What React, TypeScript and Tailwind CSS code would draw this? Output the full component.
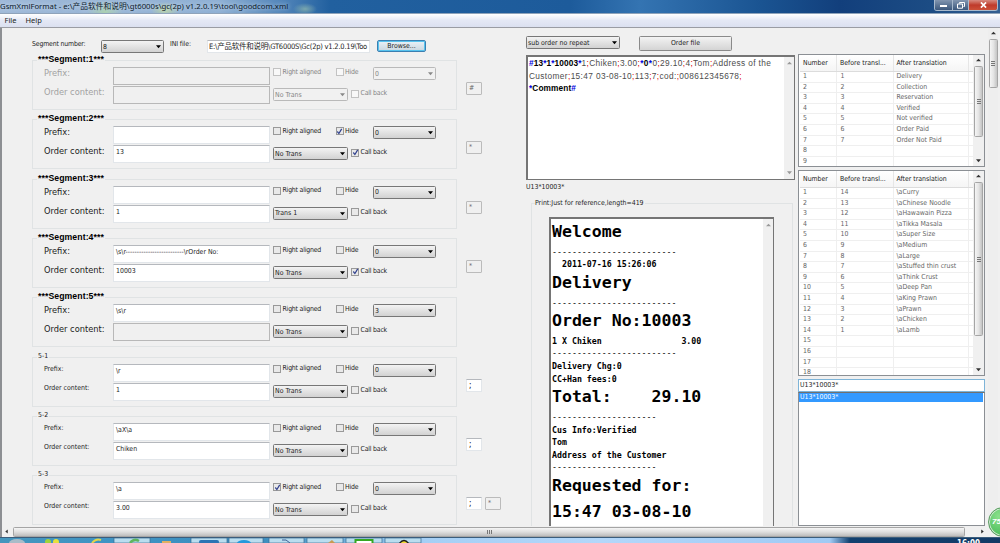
import type { ReactNode } from "react"
import clsx from "clsx"

type Segment = {
  title: string
  small?: boolean
  disabled?: boolean
  prefix: string
  content: string
  contentDisabled?: boolean
  rightAligned?: boolean
  hide?: boolean
  callBack?: boolean
  level: string
  trans: string
  separators: { value: string; disabled?: boolean }[]
}

const segments: Segment[] = [
  { title: "***Segment:1***", disabled: true, prefix: "", content: "", contentDisabled: true, level: "0", trans: "No Trans", separators: [{ value: "#", disabled: true }] },
  { title: "***Segment:2***", prefix: "", content: "13", hide: true, callBack: true, level: "0", trans: "No Trans", separators: [{ value: "*", disabled: true }] },
  { title: "***Segment:3***", prefix: "", content: "1", level: "0", trans: "Trans 1", separators: [{ value: "*", disabled: true }] },
  { title: "***Segment:4***", prefix: "\\s\\r--------------------------\\rOrder No:", content: "10003", callBack: true, level: "0", trans: "No Trans", separators: [{ value: "*", disabled: true }] },
  { title: "***Segment:5***", prefix: "\\s\\r", content: "", contentDisabled: true, level: "3", trans: "No Trans", separators: [] },
  { title: "5-1", small: true, prefix: "\\r", content: "1", level: "0", trans: "No Trans", separators: [{ value: ";" }] },
  { title: "5-2", small: true, prefix: "\\aX\\a", content: "Chiken", level: "0", trans: "No Trans", separators: [{ value: ";" }] },
  { title: "5-3", small: true, prefix: "\\a", content: "3.00", rightAligned: true, level: "0", trans: "No Trans", separators: [{ value: ";" }, { value: "*", disabled: true }] },
]

const statusRows = [
  ["1", "1", "Delivery"],
  ["2", "2", "Collection"],
  ["3", "3", "Reservation"],
  ["4", "4", "Verified"],
  ["5", "5", "Not verified"],
  ["6", "6", "Order Paid"],
  ["7", "7", "Order Not Paid"],
  ["8", "", ""],
  ["9", "", ""],
]

const menuRows = [
  ["1", "14", "\\aCurry"],
  ["2", "13", "\\aChinese Noodle"],
  ["3", "12", "\\aHawawain Pizza"],
  ["4", "11", "\\aTikka Masala"],
  ["5", "10", "\\aSuper Size"],
  ["6", "9", "\\aMedium"],
  ["7", "8", "\\aLarge"],
  ["8", "7", "\\aStuffed thin crust"],
  ["9", "6", "\\aThink Crust"],
  ["10", "5", "\\aDeep Pan"],
  ["11", "4", "\\aKing Prawn"],
  ["12", "3", "\\aPrawn"],
  ["13", "2", "\\aChicken"],
  ["14", "1", "\\aLamb"],
  ["15", "", ""],
  ["16", "", ""],
  ["17", "", ""],
  ["18", "", ""],
]

const receipt: { text: string; big?: boolean; rule?: boolean }[] = [
  { text: "Welcome", big: true },
  { text: "-------------------------", rule: true },
  { text: "  2011-07-16 15:26:06" },
  { text: "Delivery", big: true },
  { text: "-------------------------", rule: true },
  { text: "Order No:10003", big: true },
  { text: "1 X Chiken                3.00" },
  { text: "-------------------------", rule: true },
  { text: "Delivery Chg:0" },
  { text: "CC+Han fees:0" },
  { text: "Total:    29.10", big: true },
  { text: "---------------------", rule: true },
  { text: "Cus Info:Verified" },
  { text: "Tom" },
  { text: "Address of the Customer" },
  { text: "---------------------", rule: true },
  { text: "Requested for:", big: true },
  { text: "15:47 03-08-10", big: true },
]

function Arrow({ dir, className = "text-[#333]" }: { dir: "up" | "down" | "left" | "right"; className?: string }) {
  const paths = {
    up: "M0 4 L3 1 L6 4Z",
    down: "M0 1.5 H6 L3 5Z",
    left: "M4.5 0.5 V5.5 L1.5 3Z",
    right: "M1.5 0.5 V5.5 L4.5 3Z",
  }
  return (
    <svg viewBox="0 0 6 6" className={clsx("h-[5px] w-[5px] shrink-0", className)} fill="currentColor">
      <path d={paths[dir]} />
    </svg>
  )
}

function Select({ value, disabled, className }: { value: string; disabled?: boolean; className: string }) {
  return (
    <div
      className={clsx(
        "flex h-[13px] items-center justify-between rounded-[1.5px] border pl-px pr-[2.5px]",
        disabled ? "border-[#b9b9b9] bg-[#f1f1f1] text-[#858585]" : "border-[#777] bg-linear-to-b from-[#f3f3f3] to-[#d2d2d2] text-[#1c1c1c]",
        className,
      )}
    >
      <span className="leading-[12px]">{value}</span>
      <Arrow dir="down" className={disabled ? "text-[#888]" : "text-black"} />
    </div>
  )
}

function Checkbox({ label, checked, disabled }: { label: string; checked?: boolean; disabled?: boolean }) {
  return (
    <div className={clsx("flex h-[9px] items-center gap-[1.5px] tracking-[-0.2px]", disabled ? "text-[#858585]" : "text-[#1c1c1c]")}>
      <span className={clsx("flex size-[8px] items-center justify-center border", disabled ? "border-[#c2c2c2] bg-[#f8f8f8]" : "border-[#999] bg-[#e9e9e9]")}>
        {checked && (
          <svg viewBox="0 0 8 8" className="size-[7px] shrink-0" fill="none" stroke="#33438f" strokeWidth="1.4">
            <path d="M1.5 4 L3.3 6.3 L6.5 1" />
          </svg>
        )}
      </span>
      <span className="whitespace-nowrap leading-[9px]">{label}</span>
    </div>
  )
}

function TextBox({ value, disabled }: { value: string; disabled?: boolean }) {
  return (
    <div
      className={clsx(
        "h-[18px] w-[157px] overflow-hidden whitespace-pre border pl-[2px] leading-[13px]",
        disabled ? "border-[#b8b8b8] bg-[#f0f0f0]" : "border-[#e2e6ea] border-t-[#b5b8bd] bg-white",
      )}
    >
      {value}
    </div>
  )
}

function SegmentBox({ segment }: { segment: Segment }) {
  const { small, disabled } = segment
  return (
    <section className="flex h-[59.35px] shrink-0">
      <div className="relative h-[50px] w-[425px] border border-[#e0e3e4]">
        <h3
          className={clsx(
            "absolute bg-[#f0f0f0] px-px",
            small
              ? "-top-[6px] left-[4px] leading-[8px]"
              : "-top-[7px] left-[4px] font-['Liberation_Sans'] text-[8.7px] leading-[10px] font-bold tracking-[0.08px] text-black",
          )}
        >
          {segment.title}
        </h3>
        <div className="flex pt-[6px]">
          <div
            className={clsx(
              "flex w-[80px] flex-col pl-[11px]",
              small ? "text-[6.9px]" : "-mt-px text-[9.2px]",
              disabled && "text-[#a2a2a2]",
            )}
          >
            <span className={clsx("h-[19px]", small ? "leading-[10px]" : "leading-[13px]")}>Prefix:</span>
            <span className={clsx("whitespace-nowrap", small ? "leading-[10px]" : "leading-[13px]")}>Order content:</span>
          </div>
          <div className="flex flex-col gap-[1px]">
            <TextBox value={segment.prefix} disabled={disabled} />
            <TextBox value={segment.content} disabled={segment.contentDisabled} />
          </div>
          <div className="flex flex-col pl-[3px]">
            <div className="flex h-[21px]">
              <div className="w-[62.5px] pt-[0.5px]">
                <Checkbox label="Right aligned" checked={segment.rightAligned} disabled={disabled} />
              </div>
              <div className="w-[37.5px] pt-[0.5px]">
                <Checkbox label="Hide" checked={segment.hide} disabled={disabled} />
              </div>
              <Select value={segment.level} disabled={disabled} className="w-[63px]" />
            </div>
            <div className="flex gap-[3px]">
              <Select value={segment.trans} disabled={disabled} className="w-[75px]" />
              <div className="pt-px">
                <Checkbox label="Call back" checked={segment.callBack} disabled={disabled} />
              </div>
            </div>
          </div>
        </div>
      </div>
      <div className="flex gap-[3px] pl-[9px] pt-[22px]">
        {segment.separators.map((sep, i) => (
          <span
            key={i}
            className={clsx(
              "h-[13px] w-[16px] border pl-[2px]",
              sep.disabled
                ? "rounded-[1px] border-[#bbb] bg-[#f0f0f0] leading-[11px] text-[#666]"
                : "border-[#e2e6ea] border-t-[#b5b8bd] bg-white text-[8px] leading-[11px] text-black",
            )}
          >
            {sep.value}
          </span>
        ))}
      </div>
    </section>
  )
}

function ScrollBar({ children }: { children?: ReactNode }) {
  return (
    <div className="flex w-[10px] shrink-0 flex-col items-center justify-between bg-[#f0f0f0] py-[4px]">
      <Arrow dir="up" className={children ? "text-[#222]" : "text-[#999]"} />
      {children}
      <Arrow dir="down" className={children ? "text-[#222]" : "text-[#999]"} />
    </div>
  )
}

function Thumb({ className }: { className: string }) {
  return (
    <div className={clsx("flex w-[9px] flex-col items-center justify-center gap-px rounded-[1.5px] border border-[#a5a5a5] bg-linear-to-r from-[#f5f5f5] via-[#e4e4e4] to-[#c4c4c4]", className)}>
      <i className="h-px w-[4px] bg-[#777]" />
      <i className="h-px w-[4px] bg-[#777]" />
      <i className="h-px w-[4px] bg-[#777]" />
    </div>
  )
}

function TranslationTable({ rows, className, thumb }: { rows: string[][]; className: string; thumb: string }) {
  return (
    <div className={clsx("flex shrink-0 overflow-hidden border border-[#8b8f94] bg-white pl-px", className)}>
      <div className="flex flex-1 flex-col overflow-hidden">
        <div className="grid shrink-0 grid-cols-[37px_56.5px_75px_1fr] border-b border-[#dcdcdc] bg-linear-to-b from-white to-[#f5f5f5] leading-[16px] text-[#222]">
          <span className="border-r border-[#e6e6e6] pl-[3px]">Number</span>
          <span className="whitespace-nowrap border-r border-[#e6e6e6] pl-[3px]">Before transl...</span>
          <span className="border-r border-[#e6e6e6] pl-[3px]">After translation</span>
        </div>
        {rows.map(([number, before, after]) => (
          <div key={number} className="grid h-[10.6px] shrink-0 grid-cols-[37px_56.5px_75px_1fr] border-b border-[#efefef] leading-[9px] text-[#666]">
            <span className="border-r border-[#efefef] pl-[3px]">{number}</span>
            <span className="border-r border-[#efefef] pl-[3.5px]">{before}</span>
            <span className="whitespace-nowrap border-r border-[#efefef] pl-[3px]">{after}</span>
          </div>
        ))}
      </div>
      <div className="flex w-[11px] shrink-0 flex-col items-center bg-[#f0f0f0] pt-[3px] pb-[3px]">
        <Arrow dir="up" />
        <Thumb className={thumb} />
        <span className="flex-1" />
        <Arrow dir="down" />
      </div>
    </div>
  )
}

const Sep = () => <span className="text-[#e00000]">;</span>
const Star = ({ children = "*" }: { children?: string }) => <span className="text-[#0000e0]">{children}</span>

function TitleBar() {
  return (
    <header className="flex h-[14px] shrink-0 justify-between border-b border-[#8fa3ba] bg-[radial-gradient(ellipse_18px_12px_at_105px_12px,#a9cfae,transparent),radial-gradient(ellipse_14px_8px_at_165px_10px,#b8d2a2,transparent),radial-gradient(ellipse_12px_6px_at_305px_9px,#7aa7ae,transparent),linear-gradient(90deg,#9fb9d8_0px,#8fb0d4_220px,#4f83b8_285px,#21609f_330px,#1d5b9b_570px,#3474b2_640px,#1a5492_760px,#123f7c_840px,#1c4c84_930px,#345f92)]">
      <h1 className="whitespace-nowrap font-['Noto_Sans','Noto_Sans_CJK_SC',sans-serif] text-[7.75px] leading-[13px] text-[#0d1a2b] [text-shadow:0_0_4px_#dce9f6]">
        GsmXmlFormat - e:\产品软件和说明\gt6000s\gc(2p) v1.2.0.19\tool\goodcom.xml
      </h1>
      <div className="mr-[2px] flex h-[11px] overflow-hidden rounded-b-[3px] border border-t-0 border-[#a8bacd]">
        <span className="flex w-[18px] items-center justify-center border-r border-[#a8bacd] bg-linear-to-b from-[#8296b0] to-[#3c587c]">
          <i className="mt-[2px] h-[2px] w-[7px] bg-white" />
        </span>
        <span className="flex w-[16px] items-center justify-center border-r border-[#a8bacd] bg-linear-to-b from-[#8296b0] to-[#3c587c]">
          <svg viewBox="0 0 8 7" className="h-[7px] w-[8px]" fill="none" stroke="white">
            <path d="M2.5 1.5V.5H7.5V4.5H6.5M.5 2h5v4.2h-5z" />
          </svg>
        </span>
        <span className="flex w-[28px] items-center justify-center bg-linear-to-b from-[#d68a80] via-[#bf3a2b] to-[#cc5038]">
          <svg viewBox="0 0 8 7" className="h-[6px] w-[7px]" stroke="white" strokeWidth="2">
            <path d="M1 .5 7 6.5M7 .5 1 6.5" />
          </svg>
        </span>
      </div>
    </header>
  )
}

function Receipt() {
  return (
    <div className="relative mt-[12px] ml-[5px] h-[340px] w-[262px] border border-[#e0e3e4]">
      <h3 className="absolute -top-[5px] left-[3px] bg-[#f0f0f0] pr-px leading-[8px]">Print:Just for reference,length=419</h3>
      <div className="mt-[13px] ml-[17px] flex h-[330px] w-[225px] border-2 border-r border-[#757575] bg-white">
        <div className="flex-1 overflow-hidden pt-px pl-px font-['DejaVu_Sans_Mono',monospace] font-bold text-black">
          {receipt.map((line, i) => (
            <p
              key={i}
              className={clsx(
                "whitespace-pre",
                line.big ? "h-[25.7px] text-[16.55px] leading-[24.7px]" : "h-[12.6px] text-[8.27px] leading-[12.6px]",
                line.rule && "font-normal",
              )}
            >
              {line.text}
            </p>
          ))}
        </div>
        <ScrollBar />
      </div>
    </div>
  )
}

function TaskBar() {
  return (
    <footer className="flex h-[6px] shrink-0 items-end overflow-hidden border-t border-[#3b5d7c] bg-[linear-gradient(90deg,#4596bd_0px,#3f94c4_110px,#3c8dbd_260px,#a5cff5_425px,#b3d7fa_600px,#a0caf4_830px,#11406f_850px,#123a66)]">
      <svg viewBox="0 0 425 5" className="h-[5px] w-[425px]">
        <path d="M114 0h36v5h-36zM191 0h36v5h-36zM229 0h34v5h-34zM269 0h35v5h-35zM307 0h36v5h-36zM346 0h36v5h-36zM385 0h36v5h-36z" fill="#b9ddef" stroke="#3b6c94" strokeWidth=".7" />
        <ellipse cx="17" cy="5" rx="8" ry="4" fill="#a9bcc8" />
        <circle cx="48" cy="4" r="3" fill="#9ed43c" />
        <circle cx="56" cy="4" r="3" fill="#e6e13c" />
        <path d="M92 5q4-5 9-3" stroke="#e2d54a" strokeWidth="2" fill="none" />
        <path d="M130 5q4-5 9-2" stroke="#5fb560" strokeWidth="2.5" fill="none" />
        <path d="M162 3h9v2h-9z" fill="#e1b061" />
        <rect x="199" y="2" width="20" height="4" rx="2" fill="#2c74b4" />
        <ellipse cx="244" cy="5" rx="7" ry="3" fill="#2499dc" />
        <path d="M282 2h4l4 3" stroke="#3f5f96" fill="none" />
        <path d="M328 5l4-3 3 3" fill="#c79b52" />
        <path d="M355.5 6V2h17v4" stroke="#35a721" strokeWidth="2" fill="white" />
        <path d="M399 6q5-7 10 0" stroke="#1b1b1b" strokeWidth="1.3" fill="#f0d92f" />
      </svg>
      <span className="ml-[532px] h-[3px] text-[8px] leading-[8px] font-bold text-white">16:00</span>
    </footer>
  )
}

export default function App() {
  return (
    <div className="relative flex h-[543px] w-[1000px] flex-col overflow-hidden bg-[#f0f0f0] font-['DejaVu_Sans_Condensed','Noto_Sans_CJK_SC',sans-serif] text-[6.9px] text-[#1c1c1c]">
      <TitleBar />
      <nav className="flex h-[14px] shrink-0 gap-[9px] border-b border-[#9a9ca3] bg-linear-to-b from-white via-[#e4e8f5] to-[#dbe0f0] pl-[4.5px] font-['Noto_Sans',sans-serif] text-[7.5px] leading-[12px]">
        <span>File</span>
        <span>Help</span>
      </nav>

      <main className="flex h-[498px] shrink-0 overflow-hidden border-l-2 border-[#8d8f93]">
        <div className="flex w-[524px] shrink-0 flex-col overflow-hidden pl-[30px]">
          <div className="flex h-[32px] shrink-0 items-start pt-[10px]">
            <span className="w-[69px] leading-[13px] tracking-[-0.17px]">Segment number:</span>
            <Select value="8" className="mt-[2px] w-[63px]" />
            <span className="w-[43px] pl-[6px] leading-[13px] tracking-[-0.1px]">INI file:</span>
            <span className="mt-[2px] h-[13px] w-[163px] overflow-hidden whitespace-nowrap border border-[#e2e6ea] border-t-[#b5b8bd] bg-white pl-px text-[7.5px] leading-[11px] tracking-[-0.22px]">
              E:\产品软件和说明\GT6000S\Gc(2p) v1.2.0.19\Too
            </span>
            <button className="mt-[2px] ml-[7px] h-[12px] w-[49px] rounded-[2px] border border-[#3c7fb1] bg-linear-to-b from-[#eaf2f8] to-[#c9d6df] leading-[9px] ring-1 ring-[#57c3ee] ring-inset">
              Browse...
            </button>
          </div>
          {segments.map((segment) => (
            <SegmentBox key={segment.title} segment={segment} />
          ))}
        </div>

        <div className="flex w-[269px] shrink-0 flex-col overflow-hidden">
          <div className="flex h-[27px] shrink-0 gap-[19px] pt-[8px]">
            <Select value="sub order no repeat" className="w-[94px]" />
            <button className="h-[15px] w-[93px] rounded-[1.5px] border border-[#8a8a8a] bg-linear-to-b from-[#f3f3f3] to-[#d4d4d4] leading-[13px]">Order file</button>
          </div>
          <div className="flex h-[125px] shrink-0 border-2 border-r border-b border-[#757575] bg-white">
            <div className="flex-1 overflow-hidden whitespace-nowrap pl-px font-['Liberation_Sans',sans-serif] text-[8.3px] leading-[12.5px] tracking-[0.37px] text-[#4c4c4c]">
              <p>
                <b className="tracking-[0.1px] text-black">
                  <Star>#</Star>13<Star />1<Star />10003<Star />
                </b>
                1<Sep />Chiken<Sep />3.00<Sep />
                <b className="text-black">
                  <Star />0<Star />
                </b>
                0<Sep />29.10<Sep />4<Sep />Tom<Sep />Address of the
              </p>
              <p>
                Customer<Sep />15:47 03-08-10<Sep />113<Sep />7<Sep />cod:<Sep />008612345678<Sep />
              </p>
              <p className="font-bold tracking-[0.1px] text-black">
                <Star />Comment<Star>#</Star>
              </p>
            </div>
            <ScrollBar />
          </div>
          <p className="mt-[3px] h-[8px] shrink-0 leading-[8px]">U13*10003*</p>
          <Receipt />
        </div>

        <div className="ml-[3px] flex w-[187px] shrink-0 flex-col pt-[26px]">
          <TranslationTable rows={statusRows} className="h-[113px]" thumb="mt-[3px] h-[71px]" />
          <TranslationTable rows={menuRows} className="mt-[3px] h-[206px]" thumb="mt-[3px] h-[154px]" />
          <div className="mt-[3px] h-[13px] shrink-0 border border-[#7eb4d8] bg-white pl-px leading-[11px]">U13*10003*</div>
          <div className="flex-1 border border-t-[#707070] border-[#8b8f94] bg-white">
            <div className="mr-px h-[9px] bg-[#3399ff] pl-px leading-[9px] text-white">U13*10003*</div>
          </div>
        </div>

        <div className="ml-[3px] flex w-[10px] shrink-0 flex-col items-center bg-[#eeeeee] pt-[3px]">
          <Arrow dir="up" />
          <Thumb className="mt-[3px] h-[49px]" />
        </div>
      </main>

      <div className="flex h-[11px] shrink-0 items-center border-l-2 border-[#8d8f93] bg-[#f0f0f0] pr-[15px] pl-[2px]">
        <Arrow dir="left" />
        <div className="ml-[4px] flex h-[10px] w-[952px] items-center justify-center gap-px rounded-[1.5px] border border-[#a5a5a5] bg-linear-to-b from-[#f5f5f5] via-[#dedede] to-[#bdbdbd]">
          <i className="h-[4px] w-px bg-[#777]" />
          <i className="h-[4px] w-px bg-[#777]" />
          <i className="h-[4px] w-px bg-[#777]" />
        </div>
        <Arrow dir="right" className="ml-auto text-[#222]" />
      </div>
      <TaskBar />

      {/* floating usage meter, half off the screen edge */}
      <div className="absolute top-[507px] left-[988px] size-[30px] rounded-full border border-[#5c9a62] bg-radial-[at_35%_30%] from-[#8be08c] to-[#2fae45] pl-[3px] font-['Liberation_Sans'] text-[8px] leading-[27px] font-bold text-white italic ring-1 ring-[#d5ead6] ring-inset">
        75%
      </div>
    </div>
  )
}
